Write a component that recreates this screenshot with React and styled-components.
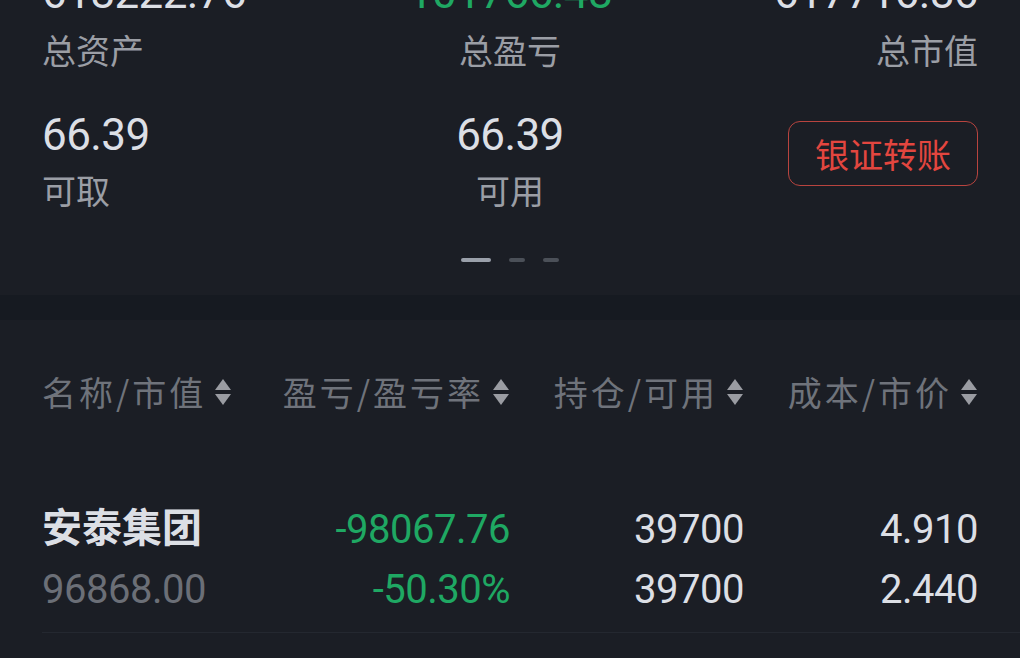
import React from "react";
import styled, { createGlobalStyle } from "styled-components";

const GlobalStyle = createGlobalStyle`
  html, body {
    margin: 0;
    padding: 0;
    background: #1b1e25;
    overflow: hidden;
  }
  body {
    font-family: Roboto, "Noto Sans CJK SC", sans-serif;
    -webkit-font-smoothing: antialiased;
  }
`;

const Page = styled.div`
  width: 1020px;
  height: 658px;
  overflow: hidden;
  background: #1b1e25;
`;

const Summary = styled.section`
  padding: 0 42px 33px;
`;

const TopRow = styled.div`
  display: grid;
  grid-template-columns: 1fr 1fr 1fr;
  margin-top: ${(p) => p.$mt || 0}px;
`;

const BigValue = styled.div`
  font-family: Roboto, "Noto Sans CJK SC", sans-serif;
  font-size: 44px;
  line-height: 48px;
  color: ${(p) => (p.$green ? "#1fa863" : "#dcdfe5")};
  text-align: ${(p) => p.$align || "left"};
  letter-spacing: -0.6px;
`;

const Label = styled.div`
  font-family: "Noto Sans CJK SC", sans-serif;
  font-size: 34px;
  line-height: 40px;
  color: #9b9ea5;
  text-align: ${(p) => p.$align || "left"};
`;

const Stat = styled.div`
  display: flex;
  flex-direction: column;
  align-items: ${(p) => p.$align || "flex-start"};
  gap: ${(p) => p.$gap || 0}px;
`;

const StatsGrid = styled.div`
  display: grid;
  grid-template-columns: 1fr 1fr 1fr;
  margin-top: 41px;
`;

const TransferButton = styled.button`
  justify-self: end;
  align-self: start;
  margin-top: 10px;
  width: 190px;
  height: 65px;
  border: 1.5px solid #b8443f;
  border-radius: 12px;
  background: transparent;
  color: #e3463f;
  font-family: "Noto Sans CJK SC", sans-serif;
  font-size: 34px;
  line-height: 1;
  padding: 0;
`;

const Dots = styled.div`
  display: flex;
  justify-content: center;
  gap: 18px;
  margin-top: 48px;
`;

const Dot = styled.span`
  width: ${(p) => (p.$active ? 30 : 16)}px;
  height: 4px;
  border-radius: 2px;
  background: ${(p) => (p.$active ? "#9aa0aa" : "#4b5058")};
`;

const Band = styled.div`
  height: 25px;
  background: #161a21;
`;

const Table = styled.section`
  padding-top: 52px;
`;

const Grid = styled.div`
  display: grid;
  grid-template-columns: repeat(4, 234px);
  padding-left: 42px;
`;

const HeaderCell = styled.div`
  display: flex;
  align-items: center;
  justify-content: ${(p) => (p.$first ? "flex-start" : "flex-end")};
  gap: 8px;
  font-family: "Noto Sans CJK SC", sans-serif;
  font-size: 34px;
  line-height: 40px;
  letter-spacing: 3px;
  color: #6f737b;
  white-space: nowrap;
`;

const Divider = styled.div`
  padding-bottom: 12px;
  border-bottom: 1px solid #242830;
  margin-left: 42px;
`;

const RowGrid = styled.div`
  display: grid;
  grid-template-columns: repeat(4, 234px);
  margin-top: 88px;
  margin-left: 42px;
`;

const Cell = styled.div`
  font-family: ${(p) =>
    p.$cjk ? `"Noto Sans CJK SC", sans-serif` : `Roboto, sans-serif`};
  font-size: 40px;
  line-height: ${(p) => (p.$cjk ? 51 : 60)}px;
  font-weight: ${(p) => (p.$bold ? 700 : 400)};
  letter-spacing: ${(p) => (p.$cjk ? 0 : -0.5)}px;
  text-align: ${(p) => (p.$first ? "left" : "right")};
  color: ${(p) =>
    p.$tone === "green" ? "#1fa863" : p.$tone === "dim" ? "#6b6f77" : "#dcdfe5"};
  white-space: nowrap;
`;

const SortIcon = () => (
  <svg width="18" height="28" viewBox="0 0 18 28" aria-hidden="true">
    <path d="M9 1 L17 12 L1 12 Z" fill="#9a9ca2" />
    <path d="M9 27 L17 16 L1 16 Z" fill="#9a9ca2" />
  </svg>
);

const headers = ["名称/市值", "盈亏/盈亏率", "持仓/可用", "成本/市价"];

const row = [
  [
    { text: "安泰集团", cjk: true, bold: true },
    { text: "-98067.76", tone: "green" },
    { text: "39700" },
    { text: "4.910" },
  ],
  [
    { text: "96868.00", tone: "dim" },
    { text: "-50.30%", tone: "green" },
    { text: "39700" },
    { text: "2.440" },
  ],
];

export default function App() {
  return (
    <Page>
      <GlobalStyle />
      <Summary>
        <TopRow $mt={-31}>
          <BigValue>618222.76</BigValue>
          <BigValue $green $align="center">101766.48</BigValue>
          <BigValue $align="right">617716.86</BigValue>
        </TopRow>
        <TopRow $mt={13}>
          <Label>总资产</Label>
          <Label $align="center">总盈亏</Label>
          <Label $align="right">总市值</Label>
        </TopRow>
        <StatsGrid>
          <Stat $gap={11}>
            <BigValue>66.39</BigValue>
            <Label>可取</Label>
          </Stat>
          <Stat $gap={11} $align="center">
            <BigValue>66.39</BigValue>
            <Label>可用</Label>
          </Stat>
          <TransferButton>银证转账</TransferButton>
        </StatsGrid>
        <Dots>
          <Dot $active />
          <Dot />
          <Dot />
        </Dots>
      </Summary>
      <Band />
      <Table>
        <Grid>
          {headers.map((h, i) => (
            <HeaderCell key={h} $first={i === 0}>
              <span>{h}</span>
              <SortIcon />
            </HeaderCell>
          ))}
        </Grid>
        <RowGrid>
          {row.flatMap((line, li) =>
            line.map((c, ci) => (
              <Cell
                key={`${li}-${ci}`}
                $first={ci === 0}
                $cjk={c.cjk}
                $bold={c.bold}
                $tone={c.tone}
              >
                {c.text}
              </Cell>
            ))
          )}
        </RowGrid>
        <Divider />
      </Table>
    </Page>
  );
}
